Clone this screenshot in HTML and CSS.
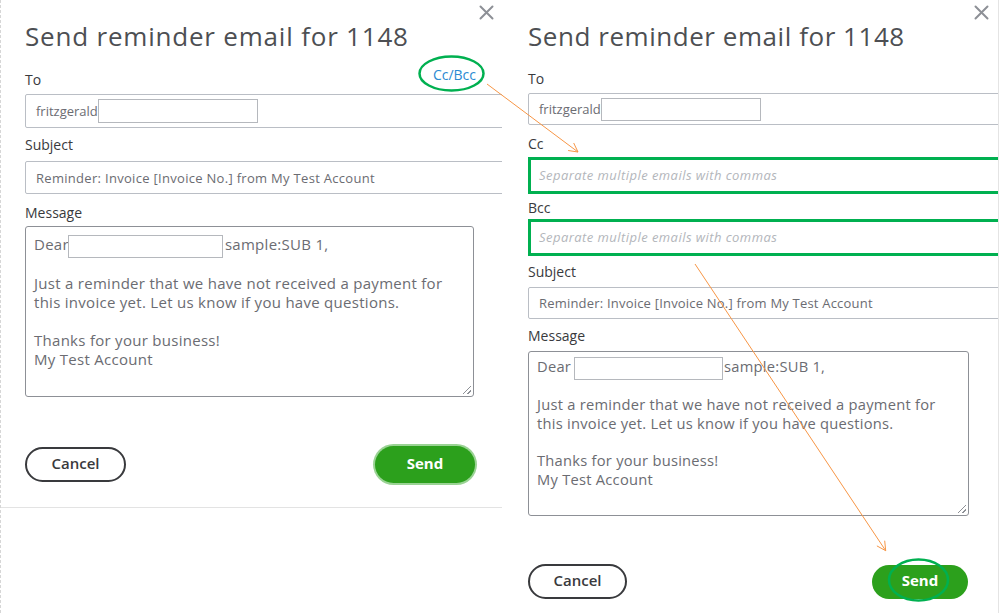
FILE: index.html
```html
<!DOCTYPE html>
<html lang="en">
<head>
<meta charset="utf-8">
<title>Send reminder email for 1148</title>
<link rel="stylesheet" href="styles.css">
</head>
<body>
<main class="shot">
  <section class="dlg dlg--a">
    <div class="top">
      <button class="close" aria-label="Close"><svg width="15" height="15" viewBox="0 0 15 15"><path d="M1.5 1.5 L13.5 13.5 M13.5 1.5 L1.5 13.5" stroke="#8d9096" stroke-width="2" stroke-linecap="round"/></svg></button>
    </div>
    <h1 class="title">Send reminder email for 1148</h1>
    <div class="row">
      <label class="lbl">To</label>
      <a class="link" href="#">Cc/Bcc</a>
    </div>
    <div class="inp inp--to"><span>fritzgerald</span><span class="chip chip--to"></span></div>
    <label class="lbl lbl--subject">Subject</label>
    <div class="inp inp--subject">Reminder: Invoice [Invoice No.] from My Test Account</div>
    <label class="lbl lbl--msg">Message</label>
    <div class="msg">
      <div class="msg__first"><span>Dear</span><span class="chip chip--dear"></span><span class="msg__name">sample:SUB 1,</span></div>
      <p class="msg__p1">Just a reminder that we have not received a payment for<br>this invoice yet. Let us know if you have questions.</p>
      <p class="msg__p2">Thanks for your business!<br>My Test Account</p>
      <span class="grip"></span>
    </div>
    <div class="actions">
      <button class="btn btn--cancel">Cancel</button>
      <button class="btn btn--send">Send</button>
    </div>
    <div class="sep"></div>
  </section>

  <section class="dlg dlg--b">
    <div class="top">
      <button class="close" aria-label="Close"><svg width="15" height="15" viewBox="0 0 15 15"><path d="M1.5 1.5 L13.5 13.5 M13.5 1.5 L1.5 13.5" stroke="#8d9096" stroke-width="2" stroke-linecap="round"/></svg></button>
    </div>
    <h1 class="title">Send reminder email for 1148</h1>
    <div class="row">
      <label class="lbl">To</label>
    </div>
    <div class="inp inp--to"><span>fritzgerald</span><span class="chip chip--to"></span></div>
    <label class="lbl lbl--cc">Cc</label>
    <div class="inp inp--green inp--cc">Separate multiple emails with commas</div>
    <label class="lbl lbl--bcc">Bcc</label>
    <div class="inp inp--green inp--bcc">Separate multiple emails with commas</div>
    <label class="lbl lbl--subject">Subject</label>
    <div class="inp inp--subject">Reminder: Invoice [Invoice No.] from My Test Account</div>
    <label class="lbl lbl--msg">Message</label>
    <div class="msg">
      <div class="msg__first"><span>Dear</span><span class="chip chip--dear"></span><span class="msg__name">sample:SUB 1,</span></div>
      <p class="msg__p1">Just a reminder that we have not received a payment for<br>this invoice yet. Let us know if you have questions.</p>
      <p class="msg__p2">Thanks for your business!<br>My Test Account</p>
      <span class="grip"></span>
    </div>
    <div class="actions">
      <button class="btn btn--cancel">Cancel</button>
      <button class="btn btn--send">Send</button>
    </div>
  </section>

  <svg class="notes" width="999" height="613" viewBox="0 0 999 613" aria-hidden="true">
    <ellipse cx="451.5" cy="73.5" rx="32" ry="17" fill="none" stroke="#00b050" stroke-width="2.5"/>
    <ellipse cx="918.5" cy="580" rx="29.5" ry="20.5" fill="none" stroke="#00b050" stroke-width="2.5"/>
    <g stroke="#f79646" stroke-width="1" fill="none">
      <path d="M487 84 L578 152 M573.7 143 L578 152 L568.1 150.5"/>
      <path d="M695 264 L885.7 550.7 M884.7 540.7 L885.7 550.7 L876.9 545.9"/>
    </g>
  </svg>
</main>
</body>
</html>
```
FILE: styles.css
```css
* { box-sizing: border-box; }

body {
  margin: 0;
  background: #fff;
  font-family: "Open Sans", "Liberation Sans", sans-serif;
  color: #393a3d;
}

.shot {
  position: relative;
  display: flex;
  width: 999px;
  height: 613px;
  overflow: hidden;
  background: #fff;
}

.dlg {
  display: flex;
  flex-direction: column;
  align-items: flex-start;
  flex: none;
  height: 613px;
  overflow: hidden;
}

.dlg--a {
  width: 502px;
  padding-left: 24px;
  border-left: 1px dashed #d6d6d6;
}

.dlg--b {
  width: 497px;
  padding-left: 26px;
  border-right: 1px solid #e4e4e4;
}

.top {
  align-self: stretch;
  display: flex;
  justify-content: flex-end;
  height: 20px;
  padding-top: 5px;
}

.close {
  display: block;
  width: 15px;
  height: 15px;
  padding: 0;
  border: 0;
  background: none;
}

.dlg--a .close { margin-right: 8px; }
.dlg--b .close { margin-right: 9px; }

.title {
  margin: 0;
  font-size: 26px;
  font-weight: 400;
  line-height: 32px;
  letter-spacing: 0.8px;
  color: #4d4f53;
  white-space: nowrap;
}

.dlg--b .title { letter-spacing: 0.55px; }

.lbl {
  display: block;
  font-size: 14px;
  line-height: 18px;
  font-weight: 500;
  color: #393a3d;
}

.row {
  display: flex;
  justify-content: space-between;
  align-items: flex-start;
}

.dlg--a .row { width: 451px; margin-top: 19px; }
.dlg--b .row { margin-top: 18px; }

.link {
  margin-top: -5px;
  font-size: 14px;
  line-height: 18px;
  color: #2b8ad2;
  text-decoration: none;
}

.inp {
  display: flex;
  align-items: center;
  flex: none;
  padding-left: 10px;
  border: 1px solid #babec5;
  border-radius: 2px;
  font-size: 13px;
  color: #6b6c72;
  white-space: nowrap;
}

.dlg--a .inp { width: 490px; }
.dlg--b .inp { width: 480px; }

.inp--subject { letter-spacing: 0.3px; }
.dlg--b .inp--subject { letter-spacing: 0.2px; }

.inp--green {
  padding-left: 8px;
  padding-bottom: 2px;
  border: 3px solid #00b050;
  border-radius: 0;
  font-style: italic;
  letter-spacing: 0.45px;
  color: #b3b6bb;
}

.chip {
  display: block;
  flex: none;
  border: 1px solid #b5b8bd;
  background: #fff;
}

.chip--to { width: 160px; height: 24px; }
.dlg--b .chip--to { height: 23px; }

/* left dialog spacing */
.dlg--a .inp--to { margin-top: 5px; height: 34px; }
.dlg--a .lbl--subject { margin-top: 8px; }
.dlg--a .inp--subject { margin-top: 7px; height: 33px; }
.dlg--a .lbl--msg { margin-top: 10px; }

/* right dialog spacing */
.dlg--b .inp--to { margin-top: 5px; height: 32px; }
.dlg--b .lbl--cc { margin-top: 10px; }
.dlg--b .inp--cc { margin-top: 4px; height: 37px; }
.dlg--b .lbl--bcc { margin-top: 5px; }
.dlg--b .inp--bcc { margin-top: 2px; height: 37px; }
.dlg--b .lbl--subject { margin-top: 7px; }
.dlg--b .inp--subject { margin-top: 6px; height: 32px; }
.dlg--b .lbl--msg { margin-top: 8px; }

.msg {
  position: relative;
  flex: none;
  border: 1px solid #8d9096;
  border-radius: 3px;
  font-size: 15px;
  line-height: 19px;
  letter-spacing: 0.28px;
  color: #6b6c72;
  white-space: nowrap;
}

.dlg--a .msg { margin-top: 4px; width: 449px; height: 171px; padding: 8px 8px 0; }
.dlg--b .msg { margin-top: 6px; width: 441px; height: 165px; padding: 5px 8px 0; font-size: 14.7px; letter-spacing: 0.25px; }

.msg p { margin: 0; }

.msg__first {
  display: flex;
  align-items: flex-start;
  height: 23px;
}

.chip--dear { width: 155px; height: 23px; margin-left: -1px; }
.dlg--b .chip--dear { width: 149px; margin-left: 3px; }

.msg__name { margin-left: 2px; }
.dlg--b .msg__name { margin-left: 1px; }

.dlg--a .msg__p1 { margin-top: 16px; }
.dlg--a .msg__p2 { margin-top: 19px; }
.dlg--b .msg__p1 { margin-top: 15px; }
.dlg--b .msg__p2 { margin-top: 18px; }

.grip {
  position: absolute;
  right: 2px;
  bottom: 2px;
  width: 8px;
  height: 8px;
  background: linear-gradient(135deg, transparent 46%, #8d9096 46%, #8d9096 56%, transparent 56%, transparent 72%, #8d9096 72%, #8d9096 82%, transparent 82%);
}

.actions {
  display: flex;
  justify-content: space-between;
  align-items: center;
  flex: none;
}

.dlg--a .actions { margin-top: 49px; width: 451px; height: 37px; }
.dlg--b .actions { margin-top: 48px; width: 440px; height: 35px; }

.btn {
  padding: 0 0 3px;
  font-family: inherit;
  font-size: 15px;
  font-weight: 600;
  border-radius: 999px;
  cursor: pointer;
}

.btn--cancel {
  width: 101px;
  height: 35px;
  border: 2px solid #393a3d;
  background: #fff;
  color: #393a3d;
}

.btn--send {
  width: 100px;
  height: 37px;
  border: 0;
  background: #2ca01c;
  color: #fff;
  font-weight: 700;
}

.dlg--a .btn--send {
  margin-right: 1px;
  box-shadow: 0 0 0 2px #9ad394;
}

.dlg--b .btn--cancel { width: 99px; }
.dlg--b .btn--send { width: 96px; height: 34px; }

.sep {
  flex: none;
  width: 501px;
  margin-top: 24px;
  margin-left: -24px;
  border-top: 1px solid #e3e3e3;
}

.notes {
  position: absolute;
  left: 0;
  top: 0;
  pointer-events: none;
}
```
